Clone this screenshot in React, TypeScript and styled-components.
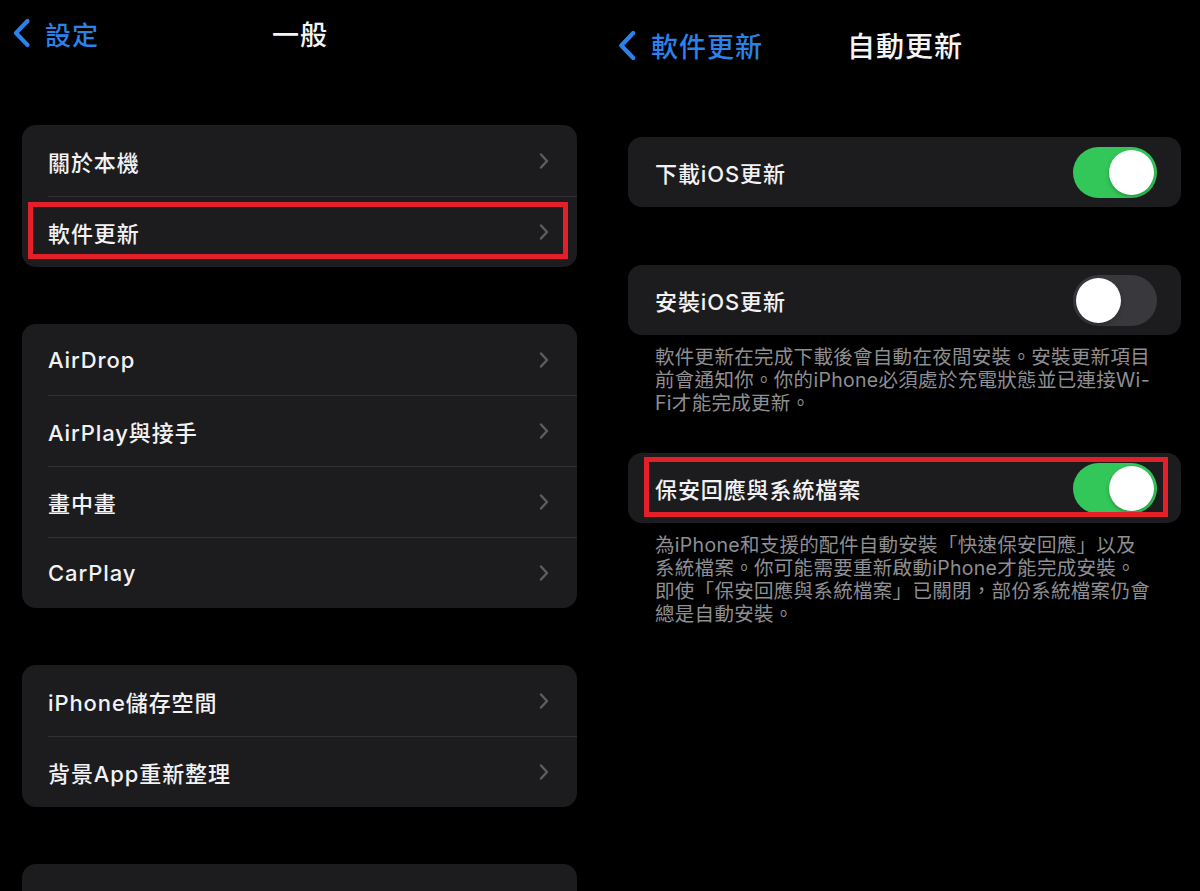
import React from "react";
import styled, { createGlobalStyle } from "styled-components";

const GlobalStyle = createGlobalStyle`
  html, body {
    margin: 0;
    padding: 0;
    background: #000;
    overflow: hidden;
  }
  body {
    font-family: Inter, "Noto Sans CJK TC", "Noto Sans", sans-serif;
    color: #f2f2f4;
  }
`;

type RowItem = { label: string; boxed?: boolean };

const leftGroups: RowItem[][] = [
  [{ label: "關於本機" }, { label: "軟件更新", boxed: true }],
  [
    { label: "AirDrop" },
    { label: "AirPlay與接手" },
    { label: "畫中畫" },
    { label: "CarPlay" },
  ],
  [{ label: "iPhone儲存空間" }, { label: "背景App重新整理" }],
  [{ label: "日期與時間" }],
];

const BackChevron = ({ w, h }: { w: number; h: number }) => (
  <svg width={w} height={h} viewBox="0 0 19 30" fill="none">
    <path
      d="M15.5 3 L4 15 L15.5 27"
      stroke="#2a82ea"
      strokeWidth="4.2"
      strokeLinecap="round"
      strokeLinejoin="round"
    />
  </svg>
);

const RowChevron = () => (
  <svg width="10" height="16" viewBox="0 0 10 16" fill="none">
    <path
      d="M2 1.5 L8 8 L2 14.5"
      stroke="#5d5d62"
      strokeWidth="2.4"
      strokeLinecap="round"
      strokeLinejoin="round"
    />
  </svg>
);

const App = () => {
  return (
    <Screen>
      <GlobalStyle />
      <Panel>
        <Header $height={66} $gap={59} $padL={12} $padR={12}>
          <Back>
            <BackChevron w={19} h={30} />
            <BackLabel $size={26}>設定</BackLabel>
          </Back>
          <Title $size={27}>一般</Title>
          <span />
        </Header>
        <Content $padL={22} $padR={23} $gap={57}>
          {leftGroups.map((group, gi) => (
            <Card key={gi}>
              {group.map((row, ri) => (
                <Row key={ri} $first={ri === 0} $h={71} $padL={26} $padR={28}>
                  <RowLabel>{row.label}</RowLabel>
                  <RowChevron />
                  {row.boxed && <RedBox $inset="6px 9px 8px 6px" />}
                </Row>
              ))}
            </Card>
          ))}
        </Content>
      </Panel>

      <Panel>
        <Header $height={90} $gap={47} $padL={17} $padR={7}>
          <Back>
            <BackChevron w={20} h={31} />
            <BackLabel $size={27}>軟件更新</BackLabel>
          </Back>
          <Title $size={28}>自動更新</Title>
          <span />
        </Header>
        <Content $padL={28} $padR={19} $gap={0}>
          <Card>
            <Row $first $h={70} $padL={27} $padR={24}>
              <RowLabel>下載iOS更新</RowLabel>
              <Toggle $on>
                <Knob />
              </Toggle>
            </Row>
          </Card>
          <Card $top={58}>
            <Row $first $h={70} $padL={27} $padR={24}>
              <RowLabel>安裝iOS更新</RowLabel>
              <Toggle>
                <Knob />
              </Toggle>
            </Row>
          </Card>
          <Footnote>
            <Line>軟件更新在完成下載後會自動在夜間安裝。安裝更新項目</Line>
            <Line>前會通知你。你的iPhone必須處於充電狀態並已連接Wi-</Line>
            <Line>Fi才能完成更新。</Line>
          </Footnote>
          <Card $top={38}>
            <Row $first $h={70} $padL={27} $padR={24}>
              <RowLabel>保安回應與系統檔案</RowLabel>
              <Toggle $on>
                <Knob />
              </Toggle>
              <RedBox $inset="4px 13px 6px 16px" />
            </Row>
          </Card>
          <Footnote>
            <Line>為iPhone和支援的配件自動安裝「快速保安回應」以及</Line>
            <Line>系統檔案。你可能需要重新啟動iPhone才能完成安裝。</Line>
            <Line>即使「保安回應與系統檔案」已關閉，部份系統檔案仍會</Line>
            <Line>總是自動安裝。</Line>
          </Footnote>
        </Content>
      </Panel>
    </Screen>
  );
};

export default App;

const Screen = styled.div`
  display: flex;
  width: 1200px;
  height: 891px;
  overflow: hidden;
  background: #000;
`;

const Panel = styled.div`
  width: 600px;
  display: flex;
  flex-direction: column;
`;

const Header = styled.div<{ $height: number; $gap: number; $padL: number; $padR: number }>`
  flex-shrink: 0;
  display: grid;
  grid-template-columns: 1fr auto 1fr;
  align-items: center;
  height: ${(p) => p.$height}px;
  margin-bottom: ${(p) => p.$gap}px;
  padding: 0 ${(p) => p.$padR}px 0 ${(p) => p.$padL}px;
`;

const Back = styled.div`
  display: flex;
  align-items: center;
  gap: 14px;
`;

const BackLabel = styled.span<{ $size: number }>`
  color: #2a82ea;
  font-size: ${(p) => p.$size}px;
  font-weight: 500;
  letter-spacing: 1px;
`;

const Title = styled.span<{ $size: number }>`
  color: #f4f4f6;
  font-size: ${(p) => p.$size}px;
  font-weight: 500;
  letter-spacing: 1px;
`;

const Content = styled.div<{ $padL: number; $padR: number; $gap: number }>`
  flex-shrink: 0;
  display: flex;
  flex-direction: column;
  gap: ${(p) => p.$gap}px;
  padding: 0 ${(p) => p.$padR}px 0 ${(p) => p.$padL}px;
`;

const Card = styled.div<{ $top?: number }>`
  flex-shrink: 0;
  background: #1c1c1e;
  border-radius: 14px;
  margin-top: ${(p) => p.$top ?? 0}px;
`;

const Row = styled.div<{ $first?: boolean; $h: number; $padL: number; $padR: number }>`
  position: relative;
  display: flex;
  align-items: center;
  justify-content: space-between;
  height: ${(p) => p.$h}px;
  padding: 0 ${(p) => p.$padR}px 0 ${(p) => p.$padL}px;

  &::before {
    content: "";
    display: ${(p) => (p.$first ? "none" : "block")};
    position: absolute;
    top: 0;
    left: ${(p) => p.$padL}px;
    right: 0;
    height: 1px;
    background: #303033;
  }
`;

const RowLabel = styled.span`
  font-size: 22px;
  font-weight: 500;
  letter-spacing: 0.9px;
  color: #f2f2f4;
`;

const RedBox = styled.div<{ $inset: string }>`
  position: absolute;
  inset: ${(p) => p.$inset};
  border: 5px solid #e3202a;
  pointer-events: none;
`;

const Toggle = styled.div<{ $on?: boolean }>`
  width: 84px;
  height: 51px;
  border-radius: 26px;
  background: ${(p) => (p.$on ? "#33c759" : "#39393d")};
  display: flex;
  align-items: center;
  justify-content: ${(p) => (p.$on ? "flex-end" : "flex-start")};
  padding: 0 3px;
  box-sizing: border-box;
`;

const Knob = styled.div`
  width: 45px;
  height: 45px;
  border-radius: 50%;
  background: #fff;
  box-shadow: 0 2px 4px rgba(0, 0, 0, 0.25);
`;

const Footnote = styled.div`
  display: flex;
  flex-direction: column;
  flex-shrink: 0;
  margin-top: 11px;
  padding-left: 27px;
  font-size: 19.5px;
  line-height: 23px;
  letter-spacing: 0.3px;
  color: #8e8e93;
  white-space: nowrap;
`;

const Line = styled.span``;
